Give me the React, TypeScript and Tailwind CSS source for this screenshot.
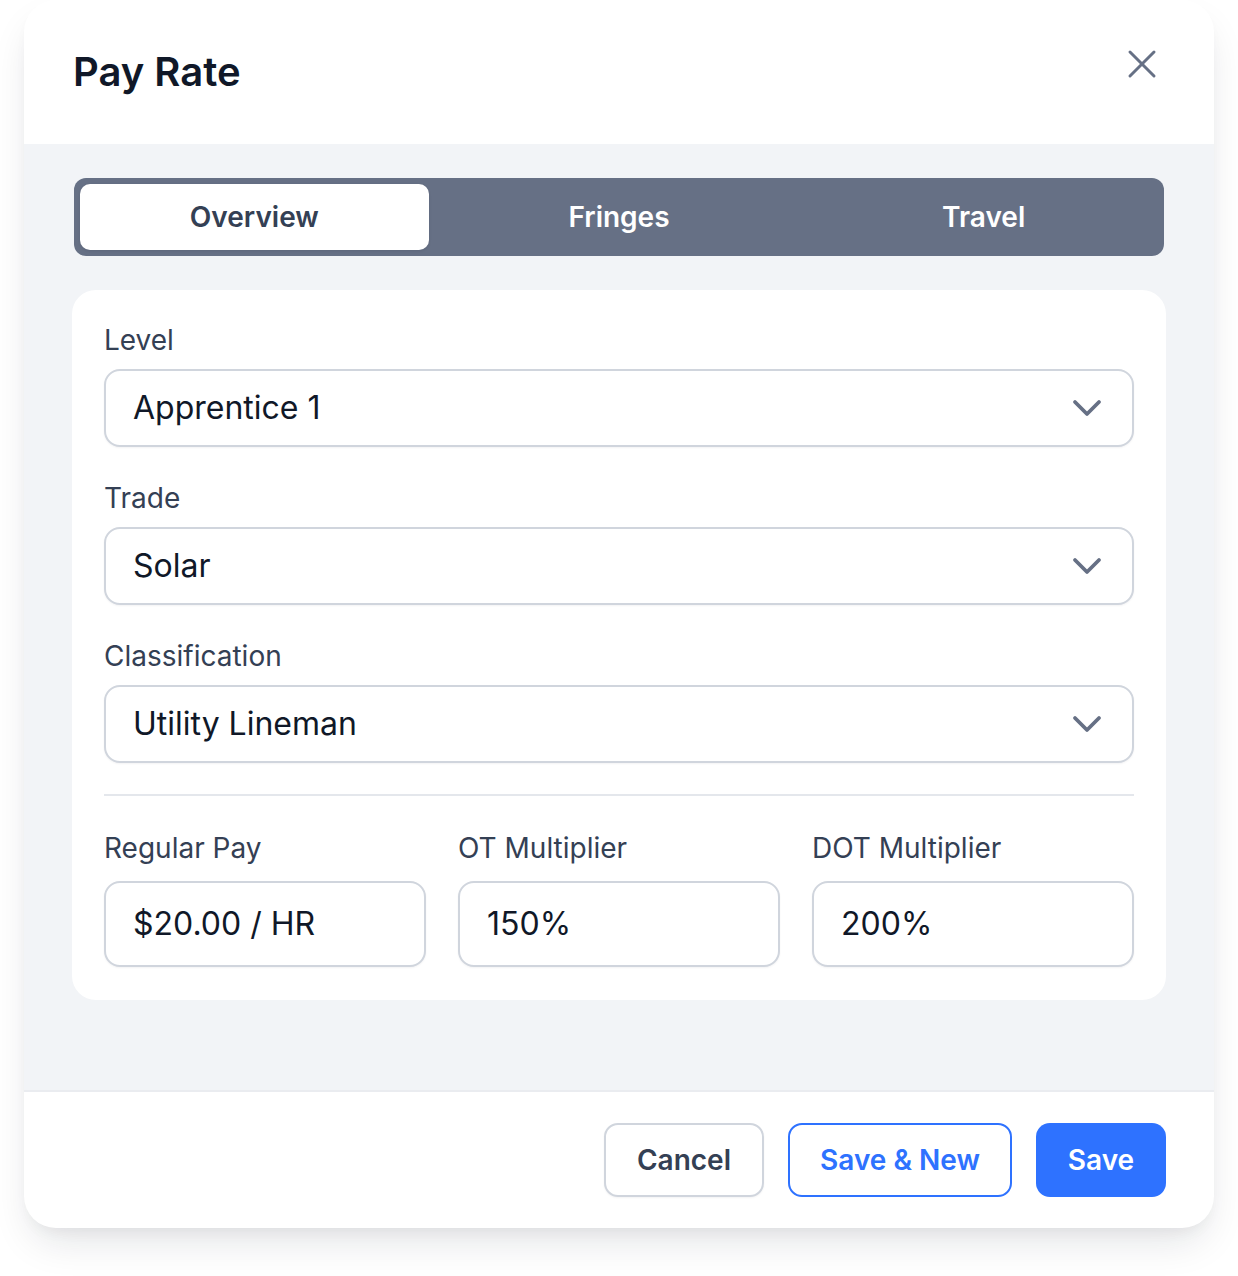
import React from 'react';
import { ChevronDown, X } from 'lucide-react';

const font = { fontFamily: 'Inter, "Noto Sans", sans-serif' };

interface FieldProps {
  label: string;
  value: string;
}

const SelectField: React.FC<FieldProps> = ({ label, value }) => (
  <div className="flex flex-col">
    <label className="text-[28px] leading-[36px] text-[#344054]">{label}</label>
    <div className="mt-[11px] flex h-[78px] items-center justify-between rounded-[16px] border-2 border-[#d0d5dd] bg-white pl-[27px] pr-[21px] shadow-[0_1px_2px_rgba(16,24,40,0.05)]">
      <span className="text-[32px] text-[#101828]">{value}</span>
      <ChevronDown className="h-[48px] w-[48px] text-[#667085]" strokeWidth={1.9} />
    </div>
  </div>
);

const NumberField: React.FC<FieldProps> = ({ label, value }) => (
  <div className="flex flex-col">
    <label className="text-[28px] leading-[36px] text-[#344054]">{label}</label>
    <div className="mt-[15px] flex h-[86px] items-center rounded-[16px] border-2 border-[#d0d5dd] bg-white px-[27px] shadow-[0_1px_2px_rgba(16,24,40,0.05)]">
      <span className="text-[32px] text-[#101828]">{value}</span>
    </div>
  </div>
);

const tabs = ['Overview', 'Fringes', 'Travel'];

export default function App() {
  return (
    <div className="min-h-screen bg-white px-[24px] pb-[48px]" style={font}>
      <div className="overflow-hidden rounded-[32px] bg-white shadow-[0_20px_40px_-8px_rgba(16,24,40,0.12),0_8px_16px_-6px_rgba(16,24,40,0.06)]">
        {/* Header */}
        <div className="flex h-[144px] items-center justify-between pl-[49px] pr-[48px]">
          <h1 className="text-[40px] font-semibold text-[#101828]">Pay Rate</h1>
          <button className="-mt-[16px] text-[#667085]">
            <X className="h-[48px] w-[48px]" strokeWidth={1.5} />
          </button>
        </div>

        {/* Body */}
        <div className="flex h-[946px] flex-col bg-[#f2f4f7] px-[48px] pt-[34px]">
          <div className="mx-[2px] grid grid-cols-3 gap-[16px] rounded-[12px] bg-[#667085] p-[6px]">
            {tabs.map((t, i) => (
              <button
                key={t}
                className={
                  i === 0
                    ? 'h-[66px] rounded-[10px] bg-white text-[28px] font-semibold text-[#344054] shadow-[0_1px_3px_rgba(16,24,40,0.1)]'
                    : 'h-[66px] rounded-[10px] text-[28px] font-semibold text-white'
                }
              >
                {t}
              </button>
            ))}
          </div>

          <div className="mt-[34px] flex flex-col rounded-[24px] bg-white px-[32px] pt-[32px] pb-[33px]">
            <div className="flex flex-col gap-[33px]">
              <SelectField label="Level" value="Apprentice 1" />
              <SelectField label="Trade" value="Solar" />
              <SelectField label="Classification" value="Utility Lineman" />
            </div>
            <div className="mt-[31px] h-[2px] bg-[#e4e7ec]" />
            <div className="mt-[34px] grid grid-cols-3 gap-[32px]">
              <NumberField label="Regular Pay" value="$20.00 / HR" />
              <NumberField label="OT Multiplier" value="150%" />
              <NumberField label="DOT Multiplier" value="200%" />
            </div>
          </div>
        </div>

        {/* Footer */}
        <div className="flex items-center justify-end gap-[24px] border-t-2 border-[#eaecf0] px-[48px] py-[31px]">
          <button className="h-[74px] w-[160px] rounded-[14px] border-2 border-[#d0d5dd] bg-white text-[28px] font-semibold text-[#344054] shadow-[0_1px_2px_rgba(16,24,40,0.05)]">
            Cancel
          </button>
          <button className="h-[74px] w-[224px] rounded-[14px] border-2 border-[#2e72ff] bg-white text-[28px] font-semibold text-[#2e72ff]">
            Save &amp; New
          </button>
          <button className="h-[74px] w-[130px] rounded-[14px] bg-[#2e72ff] text-[28px] font-semibold text-white">
            Save
          </button>
        </div>
      </div>
    </div>
  );
}
